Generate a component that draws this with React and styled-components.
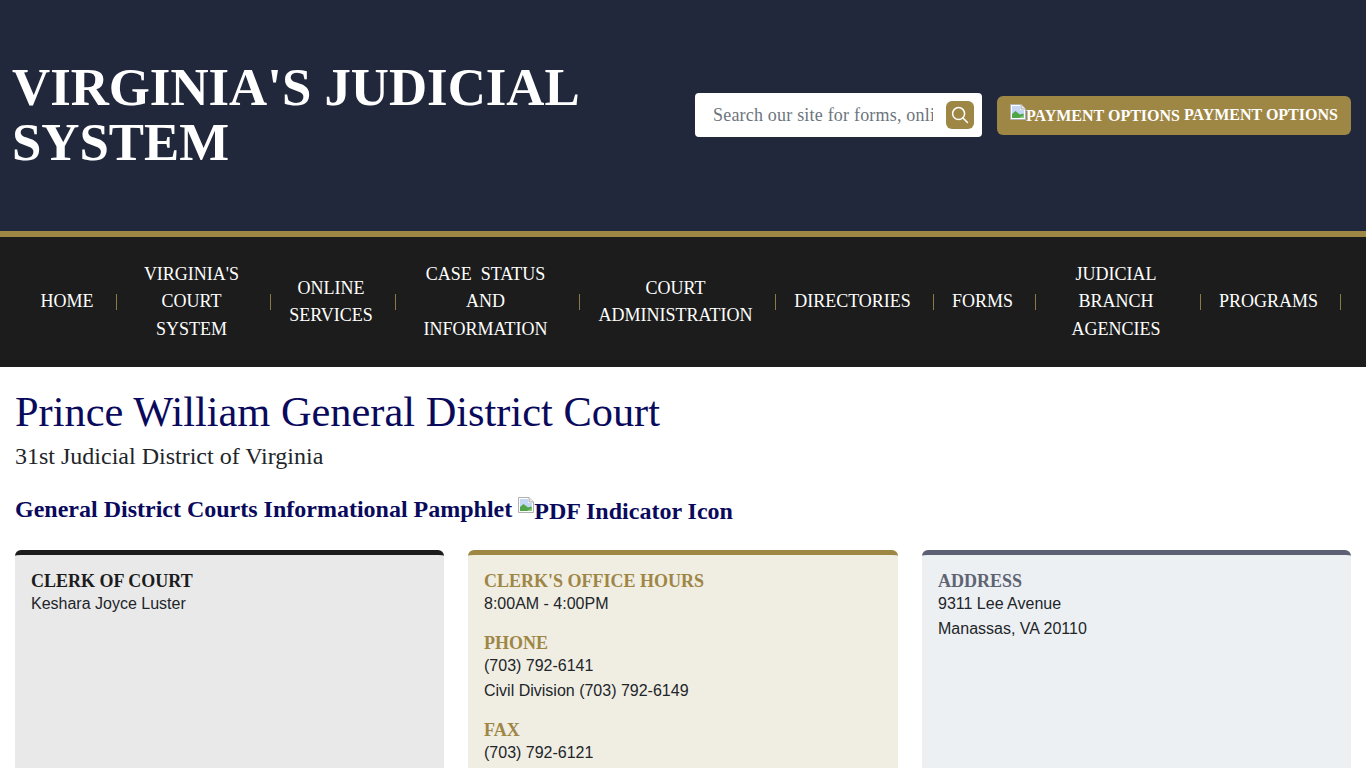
import React from "react";
import styled, { createGlobalStyle } from "styled-components";

const Global = createGlobalStyle`
  html, body {
    margin: 0;
    padding: 0;
    background: #fff;
    font-family: "Liberation Serif", "Times New Roman", serif;
    color: #212529;
  }
  * { box-sizing: border-box; }
`;

const Header = styled.header`
  height: 237px;
  background: #21283c;
  border-bottom: 6px solid #9e8645;
  display: flex;
  align-items: center;
  justify-content: space-between;
  padding: 0 15px 0 12px;
`;

const SiteTitle = styled.h1`
  margin: 0 0 2px;
  width: 620px;
  color: #fff;
  font-size: 52.8px;
  line-height: 55px;
  font-weight: 700;
`;

const HeaderTools = styled.div`
  display: flex;
  align-items: center;
  gap: 15px;
`;

const SearchBox = styled.div`
  width: 287px;
  height: 44px;
  margin-bottom: 2px;
  background: #fff;
  border-radius: 4px;
  display: flex;
  align-items: center;
  padding: 0 8px 0 18px;
  gap: 13px;
`;

const SearchInput = styled.input`
  flex: 1;
  min-width: 0;
  border: 0;
  outline: 0;
  padding: 2px 0 0;
  font-family: inherit;
  font-size: 18px;
  letter-spacing: 0.2px;
  color: #6c757d;
  &::placeholder { color: #6c757d; opacity: 1; }
`;

const SearchButton = styled.button`
  width: 28px;
  height: 28px;
  flex: none;
  border: 0;
  border-radius: 6px;
  padding: 0;
  background: #9e8645;
  color: #fff;
  display: flex;
  align-items: center;
  justify-content: center;
`;

const PaymentButton = styled.a`
  height: 39px;
  width: 354px;
  background: #9e8645;
  border-radius: 6px;
  color: #fff;
  font-size: 16px;
  font-weight: 700;
  display: flex;
  align-items: center;
  padding: 0 13px 2px;
  white-space: nowrap;
`;

const BrokenAlt = styled.span`
  display: inline-flex;
  align-items: flex-start;
  margin-top: ${(p) => p.$drop || 0}px;
  margin-right: ${(p) => p.$gap || 0}px;
`;

const BrokenIcon = styled.svg`
  width: 16px;
  height: 16px;
  flex: none;
  margin-top: ${(p) => p.$lift || 0}px;
`;

const Nav = styled.nav`
  height: 130px;
  background: #1c1c1c;
  display: flex;
  align-items: center;
  padding-left: 22px;
`;

const NavItem = styled.a`
  width: ${(p) => p.$w}px;
  flex: none;
  padding-right: 4px;
  color: #fff;
  font-size: 18px;
  line-height: 27.5px;
  text-align: center;
  white-space: pre;
`;

const NavSep = styled.span`
  width: 1px;
  height: 16px;
  flex: none;
  background: #8b7a45;
`;

const Main = styled.main`
  padding: 21px 15px 0;
`;

const CourtName = styled.h2`
  margin: 0;
  color: #0a0a5c;
  font-size: 42.4px;
  line-height: 48px;
  font-weight: 400;
`;

const District = styled.p`
  margin: 6px 0 0;
  font-size: 24px;
  line-height: 29px;
  color: #212529;
`;

const Pamphlet = styled.a`
  display: flex;
  align-items: flex-start;
  margin-top: 24px;
  color: #0a0a5c;
  font-size: 24px;
  line-height: 29px;
  font-weight: 700;
`;

const Cards = styled.div`
  display: grid;
  grid-template-columns: 429px 430px 429px;
  gap: 24px;
  margin-top: 24px;
`;

const Card = styled.section`
  background: ${(p) => p.$bg};
  border-top: 5px solid ${(p) => p.$accent};
  border-radius: 6px;
  padding: 16px 16px 40px;
  min-height: 300px;
  color: #212529;
`;

const CardLabel = styled.h3`
  margin: ${(p) => (p.$first ? 0 : "17px")} 0 0;
  color: ${(p) => p.$color};
  font-size: 18px;
  line-height: 20px;
  font-weight: 700;
`;

const CardLine = styled.div`
  font-family: "Liberation Sans", Arial, sans-serif;
  font-size: 16px;
  line-height: 25px;
  color: #212529;
`;

const BrokenImage = ({ lift }) => (
  <BrokenIcon $lift={lift} viewBox="0 0 16 16">
    <path d="M0.5 0.5H11L15.5 5V15.5H0.5Z" fill="#fff" stroke="#b0b0b0" />
    <path d="M11 0.5V5H15.5" fill="#e8e8e8" stroke="#b0b0b0" />
    <path d="M2 2H10V6H14V11H2Z" fill="#c4d7f5" />
    <path d="M2 14V10L5.5 7L10 10.5L13 9.5L14 11V14Z" fill="#4fa548" />
    <path d="M9 14L14 11V14Z" fill="#8cc97e" />
  </BrokenIcon>
);

const navItems = [
  ["HOME", 94],
  ["VIRGINIA'S\nCOURT\nSYSTEM", 153],
  ["ONLINE\nSERVICES", 124],
  ["CASE  STATUS\nAND\nINFORMATION", 183],
  ["COURT\nADMINISTRATION", 195],
  ["DIRECTORIES", 157],
  ["FORMS", 101],
  ["JUDICIAL\nBRANCH\nAGENCIES", 164],
  ["PROGRAMS", 139],
];

export default function App() {
  return (
    <>
      <Global />
      <Header>
        <SiteTitle>VIRGINIA'S JUDICIAL SYSTEM</SiteTitle>
        <HeaderTools>
          <SearchBox>
            <SearchInput placeholder="Search our site for forms, online services" />
            <SearchButton aria-label="Search">
              <svg width="18" height="18" viewBox="0 0 18 18" fill="none" stroke="currentColor" strokeWidth="1.5">
                <circle cx="7.6" cy="7.6" r="6" />
                <path d="M12 12L16.5 16.5" strokeLinecap="round" />
              </svg>
            </SearchButton>
          </SearchBox>
          <PaymentButton>
            <BrokenAlt $gap={4} $drop={2}>
              <BrokenImage lift={-3} />
              PAYMENT OPTIONS
            </BrokenAlt>
            PAYMENT OPTIONS
          </PaymentButton>
        </HeaderTools>
      </Header>
      <Nav>
        {navItems.map(([label, w]) => (
          <React.Fragment key={label}>
            <NavItem $w={w}>{label}</NavItem>
            <NavSep />
          </React.Fragment>
        ))}
      </Nav>
      <Main>
        <CourtName>Prince William General District Court</CourtName>
        <District>31st Judicial District of Virginia</District>
        <Pamphlet>
          General District Courts Informational Pamphlet&nbsp;
          <BrokenAlt $drop={2}>
            <BrokenImage />
            PDF Indicator Icon
          </BrokenAlt>
        </Pamphlet>
        <Cards>
          <Card $bg="#e9e9e9" $accent="#1c1c1c">
            <CardLabel $first $color="#1c1c1c">CLERK OF COURT</CardLabel>
            <CardLine>Keshara Joyce Luster</CardLine>
          </Card>
          <Card $bg="#f0ede3" $accent="#9e8645">
            <CardLabel $first $color="#9e8645">CLERK'S OFFICE HOURS</CardLabel>
            <CardLine>8:00AM - 4:00PM</CardLine>
            <CardLabel $color="#9e8645">PHONE</CardLabel>
            <CardLine>(703) 792-6141</CardLine>
            <CardLine>Civil Division (703) 792-6149</CardLine>
            <CardLabel $color="#9e8645">FAX</CardLabel>
            <CardLine>(703) 792-6121</CardLine>
          </Card>
          <Card $bg="#edf0f3" $accent="#5b6075">
            <CardLabel $first $color="#5f6473">ADDRESS</CardLabel>
            <CardLine>9311 Lee Avenue</CardLine>
            <CardLine>Manassas, VA 20110</CardLine>
          </Card>
        </Cards>
      </Main>
    </>
  );
}
